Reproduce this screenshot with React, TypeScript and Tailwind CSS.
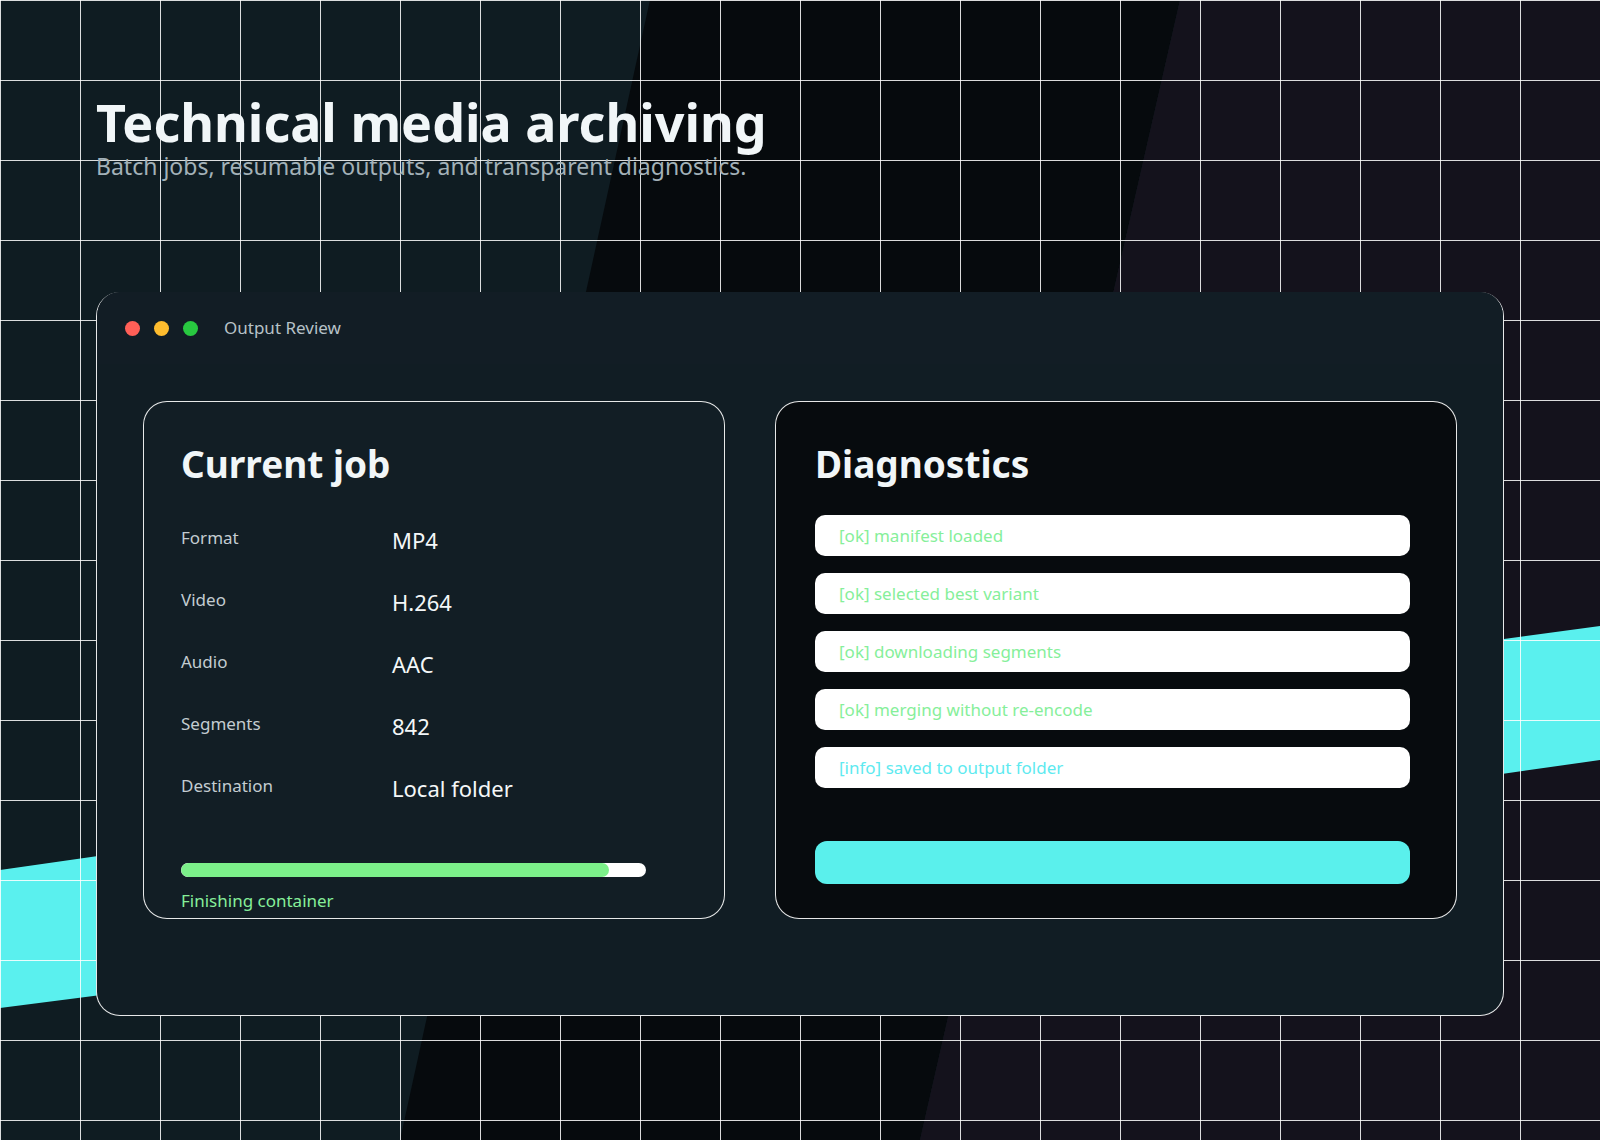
export default function App() {
  const rows = [
    ["Format", "MP4"],
    ["Video", "H.264"],
    ["Audio", "AAC"],
    ["Segments", "842"],
    ["Destination", "Local folder"],
  ];
  const logs = [
    ["[ok] manifest loaded", "text-[#86ef9a]"],
    ["[ok] selected best variant", "text-[#86ef9a]"],
    ["[ok] downloading segments", "text-[#86ef9a]"],
    ["[ok] merging without re-encode", "text-[#86ef9a]"],
    ["[info] saved to output folder", "text-[#5eeaf0]"],
  ];
  return (
    <div className="relative w-[1600px] h-[1140px] overflow-hidden bg-[#0f1c22] [font-family:'Liberation_Sans',Arial,sans-serif]">
      <div className="absolute inset-0 bg-[#060a0d] [clip-path:polygon(650px_0,1180px_0,920px_1140px,400px_1140px)]" />
      <div className="absolute inset-0 bg-[#14121c] [clip-path:polygon(1180px_0,1600px_0,1600px_1140px,920px_1140px)]" />
      <div className="absolute inset-0 bg-[#5af0ee] [clip-path:polygon(0_870px,140px_850px,140px_990px,0_1008px)]" />
      <div className="absolute inset-0 bg-[#5af0ee] [clip-path:polygon(1460px_645px,1600px_626px,1600px_760px,1460px_780px)]" />
      <div className="absolute inset-0 bg-[linear-gradient(to_right,rgba(255,255,255,0.85)_1px,transparent_1px),linear-gradient(to_bottom,rgba(255,255,255,0.85)_1px,transparent_1px)] bg-[size:80px_80px] bg-[position:80px_80px]" />

      <div className="relative px-[96px] pt-[94px]">
        <h1 className="text-[52px] leading-[56px] font-bold text-[#f1f6f8]">Technical media archiving</h1>
        <p className="text-[23px] leading-[28px] text-[#a3b1b8] mt-[2px]">Batch jobs, resumable outputs, and transparent diagnostics.</p>

        <div className="mt-[112px] w-[1408px] h-[724px] rounded-[24px] bg-[#111d24] border border-white/90 border-t-0 overflow-hidden">
          <div className="h-[72px] bg-[#121d25] flex items-center px-[28px] gap-[14px]">
            <span className="w-[15px] h-[15px] rounded-full bg-[#ff5f57]" />
            <span className="w-[15px] h-[15px] rounded-full bg-[#febc2e]" />
            <span className="w-[15px] h-[15px] rounded-full bg-[#28c840]" />
            <span className="ml-[12px] text-[17px] text-[#b7c2c8]">Output Review</span>
          </div>
          <div className="flex gap-[50px] px-[46px] pt-[37px]">
            <div className="w-[582px] h-[518px] rounded-[24px] border border-white/90 bg-[#121e25] px-[37px] pt-[40px]">
              <h2 className="text-[37px] leading-[44px] font-bold text-[#f1f6f8]">Current job</h2>
              <div className="mt-[23px] flex flex-col">
                {rows.map(([k, v]) => (
                  <div key={k} className="flex items-center h-[62px]">
                    <span className="w-[211px] text-[17px] text-[#c3ccd1] -mt-[4px]">{k}</span>
                    <span className="text-[22px] text-[#f4f7f8]">{v}</span>
                  </div>
                ))}
              </div>
              <div className="mt-[44px] w-[465px] h-[14px] rounded-full bg-white overflow-hidden">
                <div className="h-full rounded-full bg-[#7cf08a]" style={{ width: "92%" }} />
              </div>
              <p className="mt-[14px] text-[17px] leading-[20px] text-[#86ef9a]">Finishing container</p>
            </div>
            <div className="w-[682px] h-[518px] rounded-[24px] border border-white/90 bg-[#070b0e] px-[39px] pt-[40px]">
              <h2 className="text-[37px] leading-[44px] font-bold text-[#f1f6f8]">Diagnostics</h2>
              <div className="mt-[29px] flex flex-col gap-[17px] w-[595px]">
                {logs.map(([t, c]) => (
                  <div key={t} className={`h-[41px] rounded-[10px] bg-white flex items-center px-[24px] text-[17px] ${c}`}>{t}</div>
                ))}
              </div>
              <div className="mt-[53px] w-[595px] h-[43px] rounded-[12px] bg-[#5af0ec]" />
            </div>
          </div>
        </div>
      </div>
    </div>
  );
}
